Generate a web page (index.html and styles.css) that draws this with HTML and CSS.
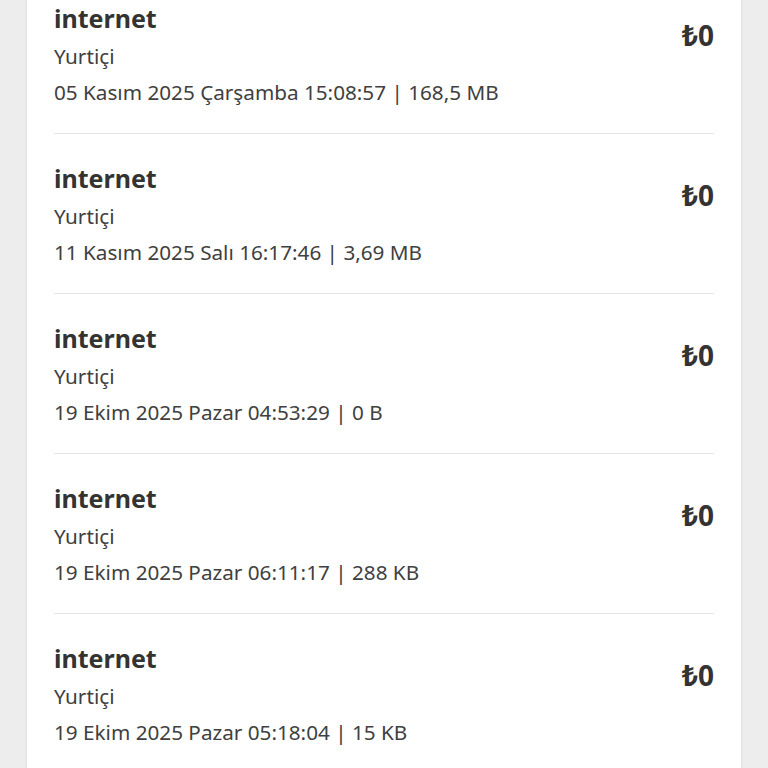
FILE: index.html
```html
<!DOCTYPE html>
<html lang="tr">
<head>
<meta charset="utf-8">
<link rel="stylesheet" href="styles.css">
</head>
<body>
<main class="card">
  <div class="row">
    <div class="info">
      <div class="title">internet</div>
      <div class="sub">Yurtiçi</div>
      <div class="meta">05 Kasım 2025 Çarşamba 15:08:57 | 168,5 MB</div>
    </div>
    <div class="price">₺0</div>
  </div>
  <div class="row">
    <div class="info">
      <div class="title">internet</div>
      <div class="sub">Yurtiçi</div>
      <div class="meta">11 Kasım 2025 Salı 16:17:46 | 3,69 MB</div>
    </div>
    <div class="price">₺0</div>
  </div>
  <div class="row">
    <div class="info">
      <div class="title">internet</div>
      <div class="sub">Yurtiçi</div>
      <div class="meta">19 Ekim 2025 Pazar 04:53:29 | 0 B</div>
    </div>
    <div class="price">₺0</div>
  </div>
  <div class="row">
    <div class="info">
      <div class="title">internet</div>
      <div class="sub">Yurtiçi</div>
      <div class="meta">19 Ekim 2025 Pazar 06:11:17 | 288 KB</div>
    </div>
    <div class="price">₺0</div>
  </div>
  <div class="row">
    <div class="info">
      <div class="title">internet</div>
      <div class="sub">Yurtiçi</div>
      <div class="meta">19 Ekim 2025 Pazar 05:18:04 | 15 KB</div>
    </div>
    <div class="price">₺0</div>
  </div>
</main>
</body>
</html>
```
FILE: styles.css
```css
html, body {
  margin: 0;
  padding: 0;
  background: #ededed;
  height: 768px;
  overflow: hidden;
}
body {
  font-family: "Noto Sans", "DejaVu Sans", sans-serif;
  color: #404040;
}
.card {
  margin: -26px 27px 0 27px;
  background: #ffffff;
  box-shadow: 0 0 2px rgba(0,0,0,0.12);
  padding: 0 27px;
}
.row {
  display: flex;
  justify-content: space-between;
  align-items: flex-start;
  height: 160px;
  box-sizing: border-box;
  border-bottom: 1px solid #e6e6e6;
  padding-top: 26px;
}
.info {
  display: flex;
  flex-direction: column;
}
.title {
  font-size: 25px;
  line-height: 36px;
  font-weight: 700;
  color: #333333;
  margin-bottom: 3px;
}
.sub, .meta {
  font-size: 20.7px;
  line-height: 36px;
}
.sub {
  line-height: 35px;
}
.price {
  font-size: 28px;
  line-height: 36px;
  font-weight: 700;
  color: #333333;
  margin-top: 17px;
}
```
